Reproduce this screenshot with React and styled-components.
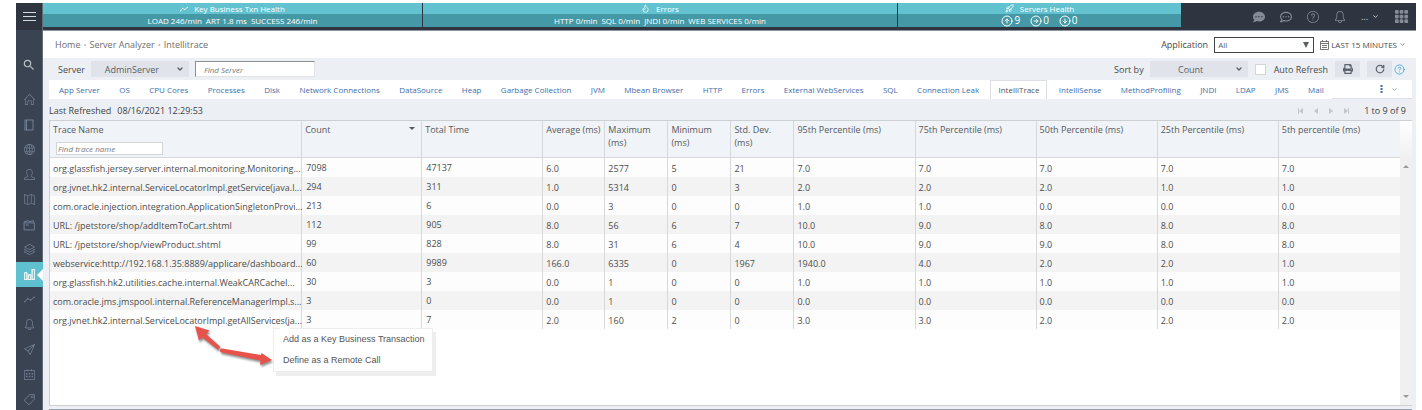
import { useState } from 'react';
import styled, { createGlobalStyle } from 'styled-components';
import {
    SlHome, SlGlobe, SlUser, SlMap, SlLayers, SlChart, SlGraph, SlBell,
    SlPaperPlane, SlCalender, SlTag, SlQuestion
} from 'react-icons/sl';
import { FaCommentDots, FaRegCommentDots, FaPrint } from 'react-icons/fa';
import { MdSearch } from 'react-icons/md';
import { BsGrid3X3GapFill } from 'react-icons/bs';
import {
    ChevronDown, CircleArrowUp, CircleArrowRight, CircleArrowDown,
    CircleQuestionMark, Flame, Rocket, RotateCw
} from 'lucide-react';

const Global = createGlobalStyle`
  * {
    box-sizing: border-box;
  }

  body {
    margin: 0;
    background: #fff;
    color: #4a4a4a;
    font-family: "Open Sans", sans-serif;
    font-size: 9px;
    line-height: 13px;
  }

  button, input, select {
    font: inherit;
    color: inherit;
    margin: 0;
    padding: 0;
    border: 0;
    border-radius: 0;
    background: none;
  }

  svg {
    display: block;
    flex: none;
  }
`;

const Page = styled.div`
  display: flex;
  height: 100vh;
  padding: 3px 6px 0 16px;
  overflow: hidden;
`;

const Sidebar = styled.nav`
  display: flex;
  flex-direction: column;
  flex: none;
  width: 27px;
  background: #3a4352;
  border-right: 1px solid #626a76;
`;

const MenuButton = styled.button`
  display: flex;
  flex: none;
  align-items: center;
  justify-content: center;
  height: 27px;
  background: #2e3440;
  color: #d5d8dc;
`;

const SideLink = styled.a`
  position: relative;
  display: flex;
  flex: none;
  align-items: center;
  justify-content: center;
  height: 25px;
  margin-top: ${props => props.$gap || 0}px;
  margin-right: ${props => props.$active ? '-1px' : '0'};
  background: ${props => props.$active ? '#5fc1cf' : 'transparent'};
  color: ${props => props.$active ? '#fff' : props.$bright ? '#b9bfc7' : '#718098'};

  ${props => props.$active && 'svg { stroke-width: 40; }'}

  &::after {
    content: "";
    display: ${props => props.$active ? 'block' : 'none'};
    position: absolute;
    right: 0;
    border: 6px solid transparent;
    border-right-color: #fff;
    border-left-width: 0;
  }
`;

const Main = styled.main`
  display: flex;
  flex-direction: column;
  flex: 1;
  min-width: 0;
  background: #ecf0f4;
`;

const TopBar = styled.header`
  display: flex;
  flex: none;
  gap: 1px;
  height: 28px;
  background: #2e3440;
  border-bottom: 1px solid #8f959d;
`;

const Health = styled.section`
  flex: ${props => props.$grow} 1 0;
  height: 24px;
  color: #fff;
  font-size: 8px;
  background: #4599a6;
`;

const HealthTitle = styled.h2`
  display: flex;
  align-items: center;
  justify-content: center;
  gap: 6px;
  height: 11px;
  margin: 0;
  font-size: 8px;
  font-weight: 500;
  line-height: 11px;
  background: #62c2d0;
`;

const HealthStats = styled.div`
  display: flex;
  align-items: center;
  justify-content: center;
  gap: ${props => props.$large ? 10 : 4}px;
  height: 13px;
  font-size: ${props => props.$large ? 10 : 8}px;
  line-height: 13px;
  white-space: nowrap;
`;

const Stat = styled.span`
  display: flex;
  align-items: center;
  gap: 1px;
`;

const TopActions = styled.div`
  display: flex;
  flex: 227 1 0;
  align-items: center;
  justify-content: flex-end;
  gap: 15px;
  padding-right: 7px;
  color: #858c96;
`;

const IconButton = styled.button`
  display: flex;
  align-items: center;
  gap: ${props => props.$gap || 4}px;
  color: ${props => props.$color || 'inherit'};
`;

const CrumbRow = styled.div`
  display: flex;
  flex: none;
  align-items: center;
  justify-content: space-between;
  height: 27px;
  padding: 0 10px 0 12px;
  background: #fff;
`;

const Crumbs = styled.nav`
  display: flex;
  gap: 3px;

  a {
    color: #6e6e6e;
    text-decoration: none;
  }

  span {
    color: #b5b5b5;
    font-size: 8px;
  }
`;

const Group = styled.div`
  display: flex;
  align-items: center;
  gap: ${props => props.$gap || 6}px;
`;

const SelectBox = styled.div`
  position: relative;
  display: flex;
  align-items: center;
  width: ${props => props.$outlined ? 100 : 98}px;
  color: #5a5f66;

  select {
    width: 100%;
    height: 16px;
    appearance: none;
    background: ${props => props.$outlined ? '#fff' : '#e0e4ea'};
    border: ${props => props.$outlined ? '1px solid #444' : '0'};
    padding: ${props => props.$outlined ? '0 16px 0 3px' : '0 16px 0 0'};
    text-align-last: ${props => props.$outlined ? 'left' : 'center'};
    font-size: ${props => props.$outlined ? 8 : 9}px;
  }

  svg {
    position: absolute;
    right: 5px;
    pointer-events: none;
  }
`;

const Toolbar = styled.div`
  display: flex;
  flex: none;
  align-items: center;
  justify-content: space-between;
  height: 22px;
  padding: 0 11px 0 15px;
`;

const FindInput = styled.input`
  width: 120px;
  height: 16px;
  padding: 0 8px;
  background: #fff;
  border: 1px solid #e2e4e6;
  border-top-color: #8e8e8e;
  border-left-color: #8e8e8e;
  font-size: 8px;

  &::placeholder {
    color: #777;
    font-style: italic;
  }
`;

const Check = styled.label`
  display: flex;
  align-items: center;
  gap: 8px;

  input {
    width: 11px;
    height: 11px;
    appearance: none;
    background: #fff;
    border: 1px solid #d2d5d9;
  }
`;

const ToolButton = styled.button`
  display: flex;
  align-items: center;
  justify-content: center;
  width: 25px;
  height: 16px;
  background: #e0e4ea;
  color: #5c6470;
`;

const TabBar = styled.div`
  display: flex;
  flex: none;
  align-items: center;
  justify-content: space-between;
  height: 19px;
  margin: 0 4px 0 6px;
  padding-left: 2px;
  background: #fff;
`;

const Tabs = styled.nav`
  display: flex;
  flex: 1;
  justify-content: space-between;
  min-width: 0;
  height: 100%;
`;

const Tab = styled.a`
  padding: 0 7px;
  border: 1px solid ${props => props.$active ? '#dcdfe3' : 'transparent'};
  border-bottom: 0;
  color: ${props => props.$active ? '#555' : '#3d6fae'};
  font-size: 8px;
  line-height: 18px;
  text-decoration: none;
  white-space: nowrap;
`;

const TabMore = styled.div`
  display: flex;
  flex: none;
  align-items: center;
  gap: 8px;
  width: 80px;
  padding-left: 48px;
  height: 100%;
  border-bottom: 1px solid #dfe2e6;
  color: #3d6fae;
`;

const StatusRow = styled.div`
  display: flex;
  flex: none;
  align-items: center;
  justify-content: space-between;
  height: 21px;
  padding: 2px 10px 0 6px;
  color: #3f3f3f;
`;

const PagerButton = styled.button`
  color: #c3c6ca;
`;

const Small = styled.span`
  font-size: 8px;
`;

const GridPanel = styled.div`
  position: relative;
  display: flex;
  flex: 1;
  min-height: 0;
  margin: 0 4px 0 6px;
  background: #fff;
  border: 1px solid #cdd0d3;
  border-right: 0;
`;

const TableArea = styled.div`
  flex: 1;
  min-width: 0;
`;

const Table = styled.table`
  width: 100%;
  table-layout: fixed;
  border-collapse: separate;
  border-spacing: 0;

  th {
    height: 37px;
    padding: 2px 0 0 3px;
    background: #f0f3f7;
    border-right: 1px solid #d6d8da;
    border-bottom: 1px solid #d6d8da;
    color: #555a60;
    font-weight: 400;
    text-align: left;
    vertical-align: top;
    white-space: pre-line;
  }

  td {
    height: 19px;
    padding: 1px 0 0 3px;
    border-right: 1px solid #d6d8da;
    color: #4d4d4d;
    white-space: nowrap;
  }

  td:nth-child(2), td:nth-child(3) {
    padding: 0 0 1px 4px;
  }

  th:last-child, td:last-child {
    border-right: 0;
  }

  tbody tr {
    background: #fdfdfd;
  }

  tbody tr:nth-child(even) {
    background: #f3f3f3;
  }
`;

const SortHead = styled.div`
  display: flex;
  align-items: flex-start;
  justify-content: space-between;
  padding: 0 6px 0 0;

  svg {
    margin-top: 3px;
  }
`;

const TraceInput = styled.input`
  display: block;
  width: 107px;
  height: 13px;
  margin: 6px 0 0 3px;
  padding: 0 1px;
  background: #fff;
  border: 1px solid #d3d6d9;
  font-size: 8px;
  line-height: 10px;

  &::placeholder {
    color: #777;
    font-style: italic;
  }
`;

const ScrollTrack = styled.div`
  display: flex;
  flex-direction: column;
  flex: none;
  justify-content: space-between;
  align-items: center;
  width: 12px;
  padding: 42px 0 5px;
  background: linear-gradient(#fff, #f0f0f0 38px);
  color: #999;
`;

const ContextMenu = styled.div`
  position: absolute;
  left: 223px;
  top: 207px;
  display: flex;
  flex-direction: column;
  width: 160px;
  background: #fff;
  border: 1px solid #eee;
  box-shadow: 3px 4px 0 #eee;

  &::before {
    content: "";
    position: absolute;
    left: 6px;
    top: -5px;
    border: 5px solid transparent;
    border-top-width: 0;
    border-bottom-color: #fff;
  }
`;

const ContextItem = styled.button`
  height: 21px;
  padding: 0 9px;
  color: #555;
  font-family: "Liberation Sans", sans-serif;
  font-size: 9px;
  text-align: left;
  white-space: nowrap;
`;

const Pointers = styled.svg`
  position: absolute;
  left: 140px;
  top: 199px;
  filter: drop-shadow(1px 2px 1px rgba(0, 0, 0, 0.45));
  pointer-events: none;
`;

const Footer = styled.div`
  flex: none;
  height: 4px;
  margin: 0 4px 0 6px;
  border-bottom: 1px solid #98a1ab;
`;

const BookIcon = (props) => (
    <svg width={props.size} height={props.size} viewBox="0 0 12 12" fill="none" stroke="currentColor">
        <rect x="2" y="1" width="8" height="10" />
        <path d="M3.500 1v10" />
    </svg>
);

const FoldersIcon = (props) => (
    <svg width={props.size} height={props.size} viewBox="0 0 12 12" fill="none" stroke="currentColor" strokeWidth="0.9">
        <path d="M1 4.500h9.500v6.500H1zM1 4.500V3.500l4-1 .6.9 4-1v2M2.500 6.500h3" />
    </svg>
);

const CalendarIcon = () => (
    <svg width="9" height="10" viewBox="0 0 9 10" fill="none" stroke="#666" strokeWidth="0.9">
        <path d="M.5 1.500h8v8h-8zM.5 3.500h8M2.500 0v2M6.500 0v2M2 5.500h5M2 7.500h5" />
    </svg>
);

const Triangle = ({ dir, bar }) => {
    const shapes = { left: 'M5 0v6L1 3z', right: 'M1 0v6l4-3z', up: 'M0 5h6L3 2z', down: 'M0 1h6L3 4z', drop: 'M0 0h6L3 6z' };
    return (
        <svg width="6" height="6" viewBox="0 0 6 6" fill="currentColor">
            <path d={shapes[dir]} />
            {bar && <rect x={dir === 'left' ? 0 : 5} y="0" width="1" height="6" />}
        </svg>
    );
};

const sideItems = [
    { name: 'Search', icon: MdSearch, bright: true, gap: 22, size: 14 },
    { name: 'Home', icon: SlHome, gap: 10 },
    { name: 'Applications', icon: BookIcon, size: 12 },
    { name: 'Web', icon: SlGlobe },
    { name: 'Users', icon: SlUser },
    { name: 'Map', icon: SlMap },
    { name: 'Files', icon: FoldersIcon, size: 13 },
    { name: 'Layers', icon: SlLayers },
    { name: 'Server Analyzer', icon: SlChart, active: true },
    { name: 'Trends', icon: SlGraph },
    { name: 'Alerts', icon: SlBell },
    { name: 'Send', icon: SlPaperPlane },
    { name: 'Calendar', icon: SlCalender },
    { name: 'Tags', icon: SlTag }
];

const tabs = [
    'App Server', 'OS', 'CPU Cores', 'Processes', 'Disk', 'Network Connections', 'DataSource', 'Heap',
    'Garbage Collection', 'JVM', 'Mbean Browser', 'HTTP', 'Errors', 'External WebServices', 'SQL',
    'Connection Leak', 'IntelliTrace', 'IntelliSense', 'MethodProfiling', 'JNDI', 'LDAP', 'JMS', 'Mail'
];

// widths are shares of the table, not fixed sizes
const columns = [
    ['Trace Name', 252], ['Count', 120], ['Total Time', 121], ['Average (ms)', 62], ['Maximum\n(ms)', 63],
    ['Minimum\n(ms)', 63], ['Std. Dev.\n(ms)', 63], ['95th Percentile (ms)', 121], ['75th Percentile (ms)', 121],
    ['50th Percentile (ms)', 121], ['25th Percentile (ms)', 121], ['5th percentile (ms)', 121]
];

const traces = [
    ['org.glassfish.jersey.server.internal.monitoring.Monitoring...', '7098', '47137', '6.0', '2577', '5', '21', '7.0', '7.0', '7.0', '7.0', '7.0'],
    ['org.jvnet.hk2.internal.ServiceLocatorImpl.getService(java.l...', '294', '311', '1.0', '5314', '0', '3', '2.0', '2.0', '2.0', '1.0', '1.0'],
    ['com.oracle.injection.integration.ApplicationSingletonProvi...', '213', '6', '0.0', '3', '0', '0', '1.0', '1.0', '0.0', '0.0', '0.0'],
    ['URL: /jpetstore/shop/addItemToCart.shtml', '112', '905', '8.0', '56', '6', '7', '10.0', '9.0', '8.0', '8.0', '8.0'],
    ['URL: /jpetstore/shop/viewProduct.shtml', '99', '828', '8.0', '31', '6', '4', '10.0', '9.0', '9.0', '8.0', '8.0'],
    ['webservice:http://192.168.1.35:8889/applicare/dashboard...', '60', '9989', '166.0', '6335', '0', '1967', '1940.0', '4.0', '2.0', '2.0', '1.0'],
    ['org.glassfish.hk2.utilities.cache.internal.WeakCARCacheI...', '30', '3', '0.0', '1', '0', '0', '1.0', '1.0', '1.0', '1.0', '1.0'],
    ['com.oracle.jms.jmspool.internal.ReferenceManagerImpl.s...', '3', '0', '0.0', '1', '0', '0', '0.0', '0.0', '0.0', '0.0', '0.0'],
    ['org.jvnet.hk2.internal.ServiceLocatorImpl.getAllServices(ja...', '3', '7', '2.0', '160', '2', '0', '3.0', '3.0', '2.0', '2.0', '2.0']
];

const App = () => {
    const [activeTab, setActiveTab] = useState('IntelliTrace');
    const [autoRefresh, setAutoRefresh] = useState(false);

    return (
        <Page>
            <Global />
            <Sidebar>
                <MenuButton aria-label="Menu">
                    <svg width="13" height="10" viewBox="0 0 13 10" stroke="currentColor">
                        <path d="M0 .5h13M0 4.500h13M0 8.500h13" />
                    </svg>
                </MenuButton>
                {sideItems.map((item) => (
                    <SideLink key={item.name} href="#" aria-label={item.name} $active={item.active} $bright={item.bright} $gap={item.gap}>
                        <item.icon size={item.size || 11} />
                    </SideLink>
                ))}
            </Sidebar>

            <Main>
                <TopBar>
                    <Health $grow={379}>
                        <HealthTitle><SlGraph size={8} />Key Business Txn Health</HealthTitle>
                        <HealthStats>
                            <span>LOAD 246/min</span>
                            <span>ART 1.8 ms</span>
                            <span>SUCCESS 246/min</span>
                        </HealthStats>
                    </Health>
                    <Health $grow={474}>
                        <HealthTitle><Flame size={9} />Errors</HealthTitle>
                        <HealthStats>
                            <span>HTTP 0/min</span>
                            <span>SQL 0/min</span>
                            <span>JNDI 0/min</span>
                            <span>WEB SERVICES 0/min</span>
                        </HealthStats>
                    </Health>
                    <Health $grow={283}>
                        <HealthTitle><Rocket size={9} />Servers Health</HealthTitle>
                        <HealthStats $large>
                            <Stat><CircleArrowUp size={12} />9</Stat>
                            <Stat><CircleArrowRight size={12} />0</Stat>
                            <Stat><CircleArrowDown size={12} />0</Stat>
                        </HealthStats>
                    </Health>
                    <TopActions>
                        <IconButton aria-label="Messages"><FaCommentDots size={12} /></IconButton>
                        <IconButton aria-label="Chat"><FaRegCommentDots size={12} /></IconButton>
                        <IconButton aria-label="Help"><SlQuestion size={12} /></IconButton>
                        <IconButton aria-label="Notifications"><SlBell size={12} /></IconButton>
                        <IconButton $color="#d5d8dc">...<ChevronDown size={7} strokeWidth={3} /></IconButton>
                        <IconButton aria-label="Apps"><BsGrid3X3GapFill size={15} /></IconButton>
                    </TopActions>
                </TopBar>

                <CrumbRow>
                    <Crumbs>
                        <a href="#">Home</a>
                        <span>•</span>
                        <a href="#">Server Analyzer</a>
                        <span>•</span>
                        <a href="#">Intellitrace</a>
                    </Crumbs>
                    <Group>
                        <label htmlFor="application">Application</label>
                        <SelectBox $outlined>
                            <select id="application"><option>All</option></select>
                            <Triangle dir="drop" />
                        </SelectBox>
                        <IconButton $gap={2}>
                            <CalendarIcon />
                            <Small>LAST 15 MINUTES</Small>
                            <ChevronDown size={7} />
                        </IconButton>
                    </Group>
                </CrumbRow>

                <Toolbar>
                    <Group>
                        <label htmlFor="server">Server</label>
                        <SelectBox>
                            <select id="server"><option>AdminServer</option></select>
                            <ChevronDown size={8} strokeWidth={4} />
                        </SelectBox>
                        <FindInput placeholder="Find Server" aria-label="Find Server" />
                    </Group>
                    <Group $gap={7}>
                        <Group>
                            <label htmlFor="sort">Sort by</label>
                            <SelectBox>
                                <select id="sort"><option>Count</option></select>
                                <ChevronDown size={8} strokeWidth={4} />
                            </SelectBox>
                        </Group>
                        <Check>
                            <input type="checkbox" checked={autoRefresh} onChange={(e) => setAutoRefresh(e.target.checked)} />
                            Auto Refresh
                        </Check>
                        <ToolButton aria-label="Print"><FaPrint size={10} /></ToolButton>
                        <Group $gap={2}>
                            <ToolButton aria-label="Refresh"><RotateCw size={10} strokeWidth={3} /></ToolButton>
                            <IconButton aria-label="Help" $color="#4fa9dc"><CircleQuestionMark size={11} /></IconButton>
                        </Group>
                    </Group>
                </Toolbar>

                <TabBar>
                    <Tabs>
                        {tabs.map((tab) => (
                            <Tab key={tab} href="#" $active={tab === activeTab} onClick={() => setActiveTab(tab)}>{tab}</Tab>
                        ))}
                    </Tabs>
                    <TabMore>
                        <svg width="3" height="9" viewBox="0 0 3 9" fill="currentColor">
                            <rect x=".5" y="0" width="2" height="2" />
                            <rect x=".5" y="3" width="2" height="2" />
                            <rect x=".5" y="6" width="2" height="2" />
                        </svg>
                        <ChevronDown size={7} />
                    </TabMore>
                </TabBar>

                <StatusRow>
                    <Group>
                        <span>Last Refreshed</span>
                        <span>08/16/2021 12:29:53</span>
                    </Group>
                    <Group $gap={15}>
                        <Group $gap={9}>
                            <PagerButton aria-label="First page"><Triangle dir="left" bar /></PagerButton>
                            <PagerButton aria-label="Previous page"><Triangle dir="left" /></PagerButton>
                            <PagerButton aria-label="Next page"><Triangle dir="right" /></PagerButton>
                            <PagerButton aria-label="Last page"><Triangle dir="right" bar /></PagerButton>
                        </Group>
                        <span>1 to 9 of 9</span>
                    </Group>
                </StatusRow>

                <GridPanel>
                    <TableArea>
                        <Table>
                            <colgroup>
                                {columns.map(([name, width]) => <col key={name} width={width} />)}
                            </colgroup>
                            <thead>
                                <tr>
                                    {columns.map(([name]) => (
                                        <th key={name}>
                                            {name === 'Count' ? <SortHead>{name}<Triangle dir="down" /></SortHead> : name}
                                            {name === 'Trace Name' && <TraceInput placeholder="Find trace name" aria-label="Find trace name" />}
                                        </th>
                                    ))}
                                </tr>
                            </thead>
                            <tbody>
                                {traces.map((row) => (
                                    <tr key={row[0]}>
                                        {row.map((cell, i) => <td key={i}>{cell}</td>)}
                                    </tr>
                                ))}
                            </tbody>
                        </Table>
                    </TableArea>
                    <ScrollTrack>
                        <Triangle dir="up" />
                        <Triangle dir="down" />
                    </ScrollTrack>

                    <ContextMenu>
                        <ContextItem>Add as a Key Business Transaction</ContextItem>
                        <ContextItem>Define as a Remote Call</ContextItem>
                    </ContextMenu>
                    <Pointers width="90" height="54" viewBox="0 0 90 54" fill="#e8524a">
                        <path d="M5 6L19.500 10.500 16 14 29.500 26a2 2 0 0 1-2.500 3L12.500 17.500 9 20.500z" />
                        <path d="M32.500 28.500L71 35 71.500 33 82 40 70 45 70.500 40.500 31.500 32.500a2 2 0 0 1 1-4z" />
                    </Pointers>
                </GridPanel>
                <Footer />
            </Main>
        </Page>
    );
};

export default App;
